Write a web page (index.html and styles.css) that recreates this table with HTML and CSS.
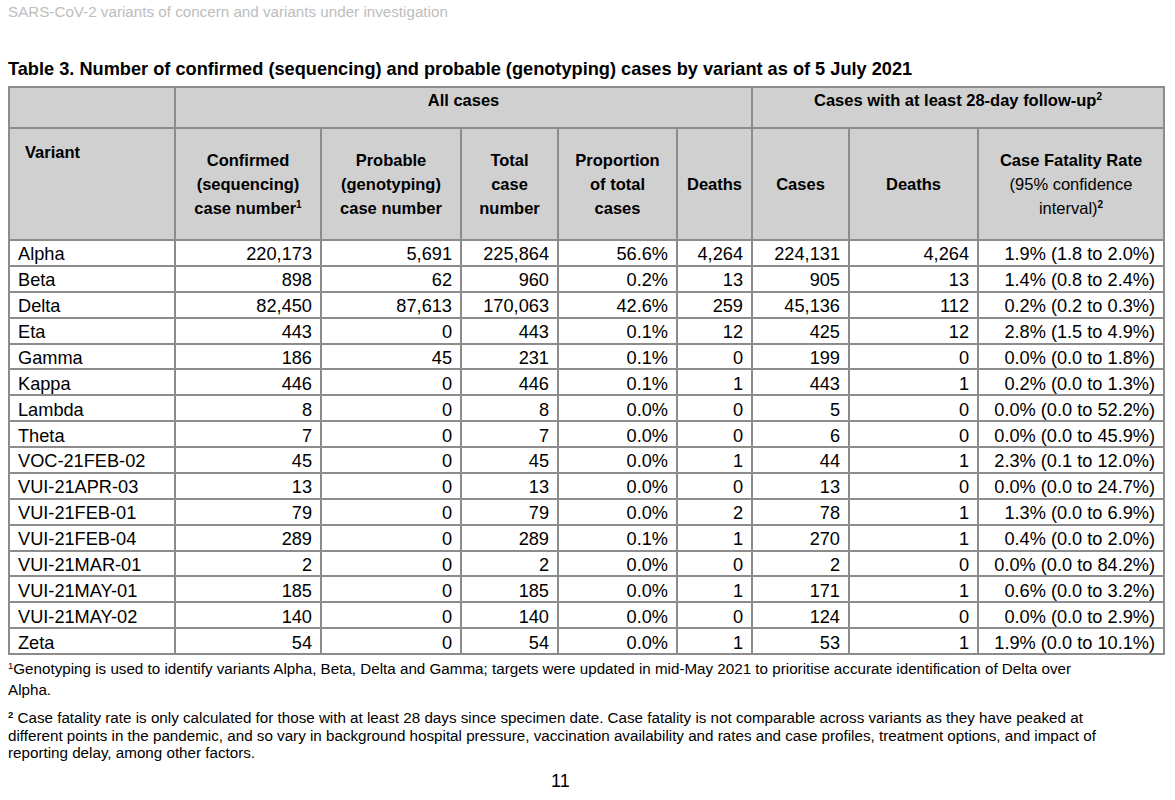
FILE: index.html
```html
<!DOCTYPE html>
<html lang="en">
<head>
<meta charset="utf-8">
<title>SARS-CoV-2 variants – Table 3</title>
<link rel="stylesheet" href="styles.css">
</head>
<body>
<div class="page">
  <header class="running-head">SARS-CoV-2 variants of concern and variants under investigation</header>

  <h2 class="table-title">Table 3. Number of confirmed (sequencing) and probable (genotyping) cases by variant as of 5 July 2021</h2>

  <table class="variants">
    <colgroup>
      <col class="c-variant">
      <col class="c-confirmed">
      <col class="c-probable">
      <col class="c-total">
      <col class="c-prop">
      <col class="c-deaths">
      <col class="c-cases28">
      <col class="c-deaths28">
      <col class="c-cfr">
    </colgroup>
    <thead>
      <tr class="group-row">
        <th></th>
        <th colspan="5">All cases</th>
        <th colspan="3">Cases with at least 28-day follow-up<sup>2</sup></th>
      </tr>
      <tr class="col-row">
        <th class="variant-head">Variant</th>
        <th>Confirmed<br>(sequencing)<br>case number<sup>1</sup></th>
        <th>Probable<br>(genotyping)<br>case number</th>
        <th>Total<br>case<br>number</th>
        <th>Proportion<br>of total<br>cases</th>
        <th>Deaths</th>
        <th>Cases</th>
        <th>Deaths</th>
        <th>Case Fatality Rate<br><span class="normal">(95% confidence<br>interval)</span><sup>2</sup></th>
      </tr>
    </thead>
    <tbody>
      <tr><td>Alpha</td><td>220,173</td><td>5,691</td><td>225,864</td><td>56.6%</td><td>4,264</td><td>224,131</td><td>4,264</td><td>1.9% (1.8 to 2.0%)</td></tr>
      <tr><td>Beta</td><td>898</td><td>62</td><td>960</td><td>0.2%</td><td>13</td><td>905</td><td>13</td><td>1.4% (0.8 to 2.4%)</td></tr>
      <tr><td>Delta</td><td>82,450</td><td>87,613</td><td>170,063</td><td>42.6%</td><td>259</td><td>45,136</td><td>112</td><td>0.2% (0.2 to 0.3%)</td></tr>
      <tr><td>Eta</td><td>443</td><td>0</td><td>443</td><td>0.1%</td><td>12</td><td>425</td><td>12</td><td>2.8% (1.5 to 4.9%)</td></tr>
      <tr><td>Gamma</td><td>186</td><td>45</td><td>231</td><td>0.1%</td><td>0</td><td>199</td><td>0</td><td>0.0% (0.0 to 1.8%)</td></tr>
      <tr><td>Kappa</td><td>446</td><td>0</td><td>446</td><td>0.1%</td><td>1</td><td>443</td><td>1</td><td>0.2% (0.0 to 1.3%)</td></tr>
      <tr><td>Lambda</td><td>8</td><td>0</td><td>8</td><td>0.0%</td><td>0</td><td>5</td><td>0</td><td>0.0% (0.0 to 52.2%)</td></tr>
      <tr><td>Theta</td><td>7</td><td>0</td><td>7</td><td>0.0%</td><td>0</td><td>6</td><td>0</td><td>0.0% (0.0 to 45.9%)</td></tr>
      <tr><td>VOC-21FEB-02</td><td>45</td><td>0</td><td>45</td><td>0.0%</td><td>1</td><td>44</td><td>1</td><td>2.3% (0.1 to 12.0%)</td></tr>
      <tr><td>VUI-21APR-03</td><td>13</td><td>0</td><td>13</td><td>0.0%</td><td>0</td><td>13</td><td>0</td><td>0.0% (0.0 to 24.7%)</td></tr>
      <tr><td>VUI-21FEB-01</td><td>79</td><td>0</td><td>79</td><td>0.0%</td><td>2</td><td>78</td><td>1</td><td>1.3% (0.0 to 6.9%)</td></tr>
      <tr><td>VUI-21FEB-04</td><td>289</td><td>0</td><td>289</td><td>0.1%</td><td>1</td><td>270</td><td>1</td><td>0.4% (0.0 to 2.0%)</td></tr>
      <tr><td>VUI-21MAR-01</td><td>2</td><td>0</td><td>2</td><td>0.0%</td><td>0</td><td>2</td><td>0</td><td>0.0% (0.0 to 84.2%)</td></tr>
      <tr><td>VUI-21MAY-01</td><td>185</td><td>0</td><td>185</td><td>0.0%</td><td>1</td><td>171</td><td>1</td><td>0.6% (0.0 to 3.2%)</td></tr>
      <tr><td>VUI-21MAY-02</td><td>140</td><td>0</td><td>140</td><td>0.0%</td><td>0</td><td>124</td><td>0</td><td>0.0% (0.0 to 2.9%)</td></tr>
      <tr><td>Zeta</td><td>54</td><td>0</td><td>54</td><td>0.0%</td><td>1</td><td>53</td><td>1</td><td>1.9% (0.0 to 10.1%)</td></tr>
    </tbody>
  </table>

  <div class="notes">
    <p class="note note-1"><sup>1</sup>Genotyping is used to identify variants Alpha, Beta, Delta and Gamma; targets were updated in mid-May 2021 to prioritise accurate identification of Delta over Alpha.</p>
    <p class="note note-2"><sup>2</sup> Case fatality rate is only calculated for those with at least 28 days since specimen date. Case fatality is not comparable across variants as they have peaked at different points in the pandemic, and so vary in background hospital pressure, vaccination availability and rates and case profiles, treatment options, and impact of reporting delay, among other factors.</p>
  </div>

  <footer class="page-number">11</footer>
</div>
</body>
</html>
```

FILE: styles.css
```css
html, body {
  margin: 0;
  padding: 0;
  background: #ffffff;
}

body {
  font-family: "Liberation Sans", Arial, sans-serif;
  color: #000000;
}

.page {
  width: 1175px;
  height: 800px;
  padding: 0 8px;
  box-sizing: border-box;
  overflow: hidden;
}

.running-head {
  padding-top: 3px;
  font-size: 15.2px;
  line-height: 17px;
  color: #bdbdbd;
}

.table-title {
  margin: 39px 0 7px 0;
  font-size: 18.2px;
  line-height: 20px;
  font-weight: bold;
}

.variants {
  border-collapse: collapse;
  table-layout: fixed;
  width: 1155px;
}

.variants th,
.variants td {
  border: 2px solid #8c8c8c;
}

.c-variant  { width: 166px; }
.c-confirmed { width: 146px; }
.c-probable { width: 140px; }
.c-total    { width: 97px; }
.c-prop     { width: 119px; }
.c-deaths   { width: 75px; }
.c-cases28  { width: 97px; }
.c-deaths28 { width: 129px; }
.c-cfr      { width: 186px; }

.variants thead th {
  background: #d0d0d0;
  font-size: 16.5px;
  font-weight: bold;
  line-height: 24.2px;
  text-align: center;
  padding: 0 4px;
}

.variants sup {
  font-size: 10px;
  line-height: 0;
  vertical-align: 6px;
}

.group-row {
  height: 41px;
}

.group-row th {
  vertical-align: top;
  padding-top: 7px;
}

.col-row {
  height: 112px;
}

.col-row th {
  vertical-align: middle;
  padding-top: 16px;
}

.col-row th.variant-head {
  vertical-align: top;
  text-align: left;
  padding: 11px 0 0 15px;
}

.normal {
  font-weight: normal;
}

.variants tbody tr {
  height: 25.875px;
}

.variants td {
  font-size: 18.2px;
  line-height: 19px;
  padding: 4px 8px 0 8px;
  text-align: right;
  white-space: nowrap;
  vertical-align: middle;
}

.variants td:first-child {
  text-align: left;
}

.notes {
  max-width: 1100px;
}

.note {
  margin: 0;
  font-size: 15.2px;
}

.note sup {
  font-size: 9.5px;
  line-height: 0;
  vertical-align: 5px;
}

.note-1 {
  line-height: 20.5px;
  padding-top: 4px;
}

.note-2 {
  line-height: 17.5px;
  margin-top: 9px;
}

.note-2 sup {
  font-weight: bold;
}

.page-number {
  margin-top: 9px;
  padding-left: 543px;
  font-size: 18px;
  line-height: 20px;
}
```
